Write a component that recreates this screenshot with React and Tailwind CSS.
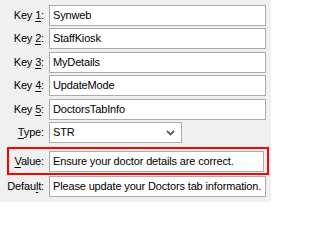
import React from "react";

const rows = [
  { label: "Key ", mn: "1", rest: ":", value: "Synweb" },
  { label: "Key ", mn: "2", rest: ":", value: "StaffKiosk" },
  { label: "Key ", mn: "3", rest: ":", value: "MyDetails" },
  { label: "Key ", mn: "4", rest: ":", value: "UpdateMode" },
  { label: "Key ", mn: "5", rest: ":", value: "DoctorsTabInfo" },
];

const Label = ({ pre, mn, post }) => (
  <div className="w-[45px] shrink-0 text-right pr-[1px] whitespace-nowrap">
    {pre}
    <span className="underline underline-offset-2">{mn}</span>
    {post}
  </div>
);

const Field = ({ value, className = "" }) => (
  <div
    className={`h-[21px] border border-[#ababab] bg-white pl-[3px] flex items-center whitespace-nowrap overflow-hidden ${className}`}
  >
    {value}
  </div>
);

export default function App() {
  return (
    <div
      className="w-[271px] h-[202px] bg-[#f0f0f0] text-black text-[11px] tracking-[-0.15px] leading-none pt-[5px] overflow-hidden"
      style={{ fontFamily: "Tahoma, 'Liberation Sans', sans-serif" }}
    >
      <div className="flex flex-col gap-[2px]">
        {rows.map((r) => (
          <div key={r.mn} className="flex items-center gap-[4px] h-[21px] mb-[0.4px]">
            <Label pre={r.label} mn={r.mn} post={r.rest} />
            <Field value={r.value} className="w-[217px]" />
          </div>
        ))}

        <div className="flex items-center gap-[4px] h-[21px] mt-[0.5px]">
          <Label pre="" mn="T" post="ype:" />
          <div className="w-[133px] h-[21px] border border-[#ababab] bg-white pl-[3px] flex items-center justify-between">
            <span>STR</span>
            <svg width="16" height="10" viewBox="0 0 16 10" className="mr-[2px]">
              <path d="M4 3 L7.5 6.5 L11 3" fill="none" stroke="#606060" strokeWidth="1.8" />
            </svg>
          </div>
        </div>

        <div className="ml-[7px] mr-[2px] mt-[2px] h-[28px] border-2 border-[#ff0000] flex items-center">
          <div className="flex items-center gap-[4px] -ml-[9px]">
            <Label pre="" mn="V" post="alue:" />
            <Field value="Ensure your doctor details are correct." className="w-[215px] h-[20px]" />
          </div>
        </div>

        <div className="flex items-center gap-[4px] h-[21px] mt-[-1px]">
          <Label pre="Defau" mn="l" post="t:" />
          <Field value="Please update your Doctors tab information." className="w-[217px]" />
        </div>
      </div>
    </div>
  );
}
